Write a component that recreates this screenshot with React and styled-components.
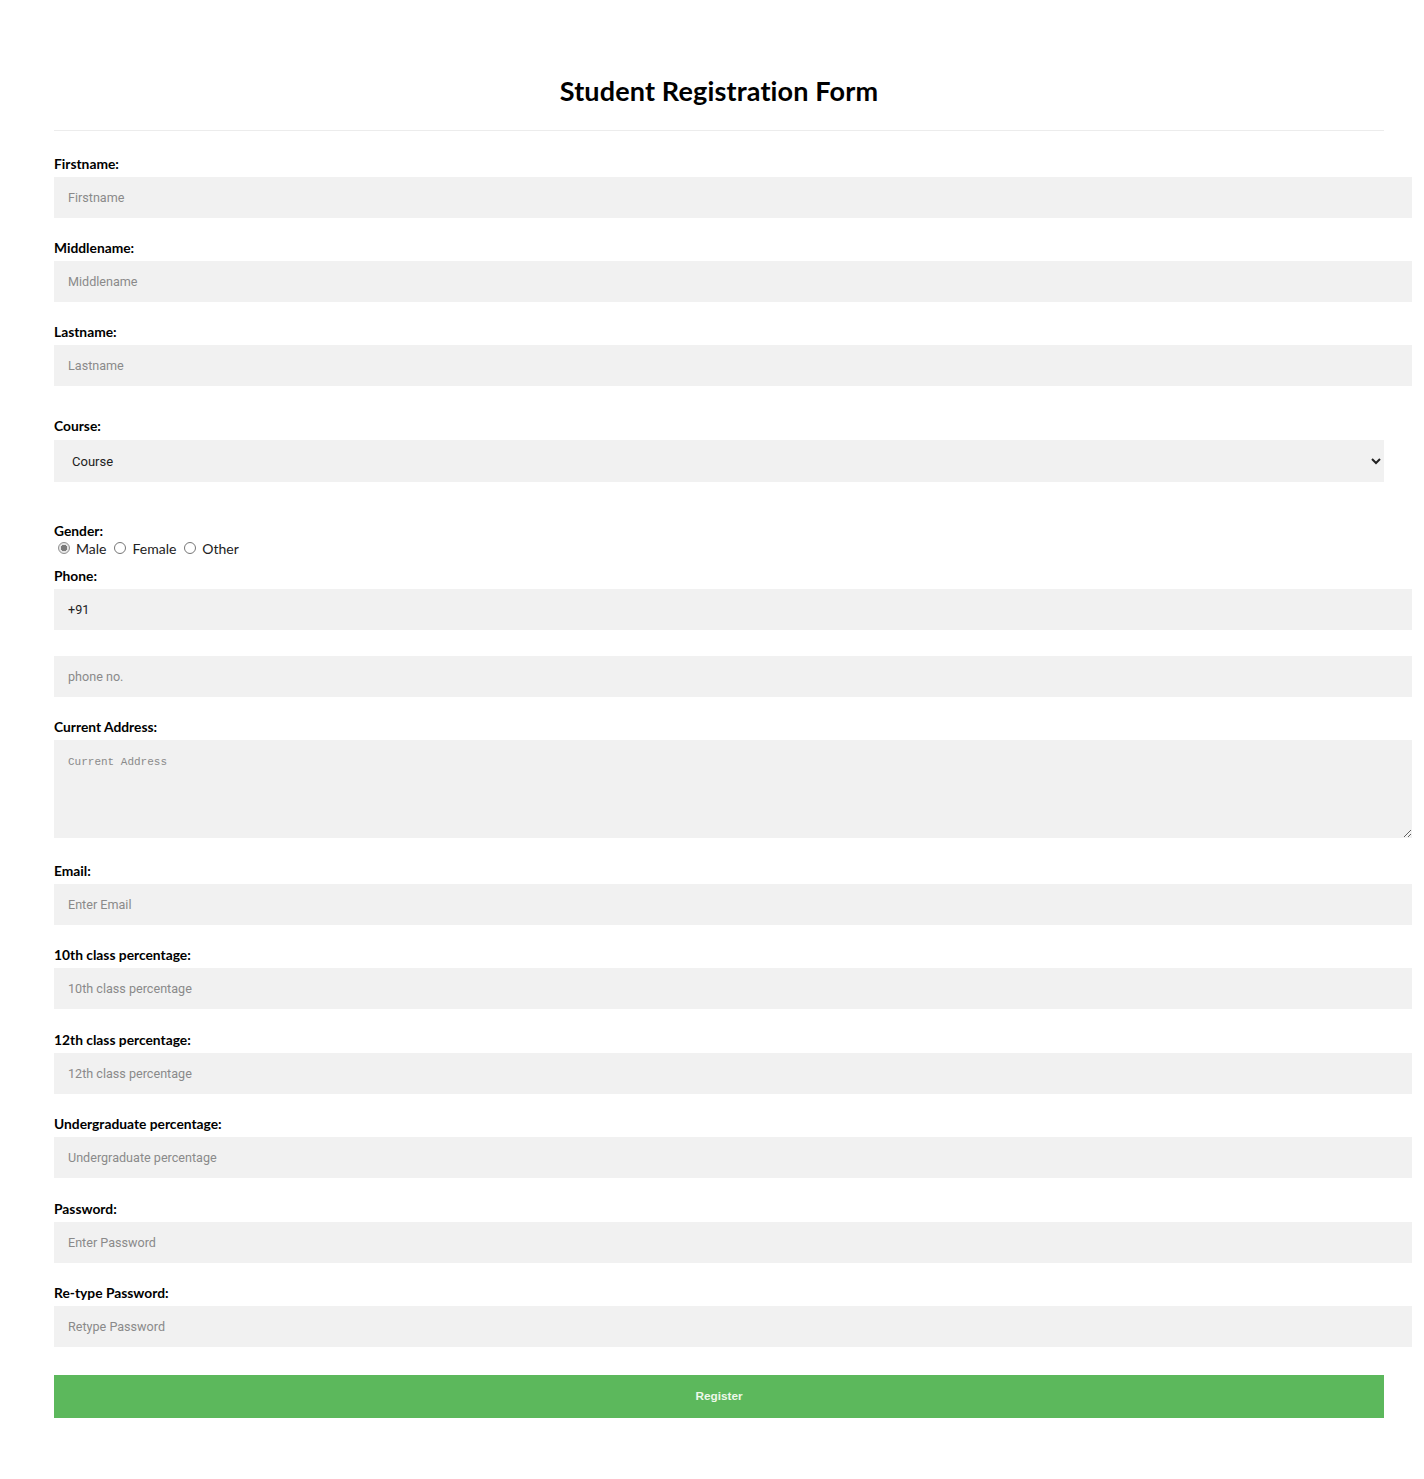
import React from "react";
import styled, { createGlobalStyle } from "styled-components";

const Global = createGlobalStyle`
  html, body { margin: 0; padding: 0; background: #fff; }
  body { font-family: "Liberation Sans", Arial, sans-serif; }
  * { font-synthesis: none; }
`;

const Page = styled.div`
  padding: 0 40px 0 54px;
`;

const Form = styled.form`
  display: block;
  padding-top: 74px;
  padding-bottom: 40px;
`;

const Title = styled.h1`
  margin: 0;
  text-align: center;
  font-family: Lato, "Open Sans", sans-serif;
  font-weight: 700;
  font-size: 27px;
  line-height: 34px;
  color: #000;
  letter-spacing: 0.15px;
`;

const Rule = styled.hr`
  border: none;
  border-top: 1px solid #ececec;
  height: 0;
  margin: 22px 0 25px;
`;

const Label = styled.label`
  display: block;
  font-family: Lato, "Open Sans", sans-serif;
  font-weight: 700;
  font-size: 13.8px;
  line-height: 16px;
  color: #000;
  margin-top: ${(p) => p.$top || 0}px;
`;

const Field = styled.input`
  display: block;
  box-sizing: content-box;
  width: 100%;
  height: 41px;
  padding: 0 14px;
  margin: 5px 0 ${(p) => (p.$bottom != null ? p.$bottom : 22)}px;
  border: none;
  outline: none;
  background: #f1f1f1;
  font-family: Roboto, "Liberation Sans", Arial, sans-serif;
  font-size: 12.6px;
  color: #222;
  &::placeholder { color: #8a8a8a; }
`;

const Select = styled.select`
  display: block;
  box-sizing: border-box;
  width: 100%;
  height: 42px;
  padding: 0 12px 0 14px;
  margin: 6px 0 0;
  border: none;
  outline: none;
  background-color: #f1f1f1;
  font-family: Roboto, "Liberation Sans", Arial, sans-serif;
  font-size: 13px;
  color: #222;
`;

const RadioRow = styled.div`
  display: flex;
  align-items: center;
  height: 18px;
  padding-left: 4px;
  margin: 0 0 11px;
  font-family: Lato, "Open Sans", sans-serif;
  font-size: 14px;
  color: #222;
`;

const RadioLabel = styled.label`
  display: inline-flex;
  align-items: center;
  margin-right: 8px;
`;

const Radio = styled.input.attrs({ type: "radio" })`
  appearance: none;
  -webkit-appearance: none;
  box-sizing: border-box;
  width: 12px;
  height: 12px;
  margin: 0 6px 0 0;
  border-radius: 50%;
  border: 1px solid #767676;
  background: #fff;
  &:checked {
    border-color: #8f8f8f;
    background: radial-gradient(circle, #7b7b7b 0 3px, #e6e6e6 3.5px);
  }
`;

const TextArea = styled.textarea`
  display: block;
  box-sizing: content-box;
  width: 100%;
  height: 82px;
  padding: 16px 14px 0;
  margin: 5px 0 25px;
  border: none;
  outline: none;
  background: #f1f1f1;
  font-family: "Liberation Mono", "DejaVu Sans Mono", monospace;
  font-size: 11px;
  color: #222;
  resize: vertical;
  &::placeholder { color: #8a8a8a; }
`;

const Button = styled.button`
  display: block;
  width: 100%;
  height: 43px;
  margin-top: 28px;
  border: none;
  background: #5cb85c;
  color: #eef8ea;
  font-family: "Liberation Sans", Arial, sans-serif;
  font-weight: 700;
  font-size: 11.8px;
  cursor: pointer;
`;

const fieldsTop = [
  ["Firstname:", "Firstname"],
  ["Middlename:", "Middlename"],
  ["Lastname:", "Lastname"],
];

const fieldsBottom = [
  ["10th class percentage:", "10th class percentage"],
  ["12th class percentage:", "12th class percentage"],
  ["Undergraduate percentage:", "Undergraduate percentage"],
  ["Password:", "Enter Password", "password"],
  ["Re-type Password:", "Retype Password", "password"],
];

export default function App() {
  return (
    <Page>
      <Global />
      <Form onSubmit={(e) => e.preventDefault()}>
        <Title>Student Registration Form</Title>
        <Rule />
        {fieldsTop.map(([l, p]) => (
          <React.Fragment key={l}>
            <Label>{l}</Label>
            <Field type="text" placeholder={p} />
          </React.Fragment>
        ))}
        <Label $top={32}>Course:</Label>
        <Select defaultValue="">
          <option value="">Course</option>
          <option>BCA</option>
          <option>BBA</option>
          <option>B.Tech</option>
          <option>MBA</option>
          <option>MCA</option>
          <option>M.Tech</option>
        </Select>
        <Label $top={41}>Gender:</Label>
        <RadioRow>
          <RadioLabel>
            <Radio name="gender" defaultChecked />
            Male
          </RadioLabel>
          <RadioLabel>
            <Radio name="gender" />
            Female
          </RadioLabel>
          <RadioLabel>
            <Radio name="gender" />
            Other
          </RadioLabel>
        </RadioRow>
        <Label>Phone:</Label>
        <Field type="text" defaultValue="+91" $bottom={26} />
        <Field type="text" placeholder="phone no." />
        <Label>Current Address:</Label>
        <TextArea placeholder="Current Address" />
        <Label>Email:</Label>
        <Field type="email" placeholder="Enter Email" $bottom={22.4} />
        {fieldsBottom.map(([l, p, t]) => (
          <React.Fragment key={l}>
            <Label>{l}</Label>
            <Field type={t || "text"} placeholder={p} $bottom={22.4} />
          </React.Fragment>
        ))}
        <Button type="submit">Register</Button>
      </Form>
    </Page>
  );
}
